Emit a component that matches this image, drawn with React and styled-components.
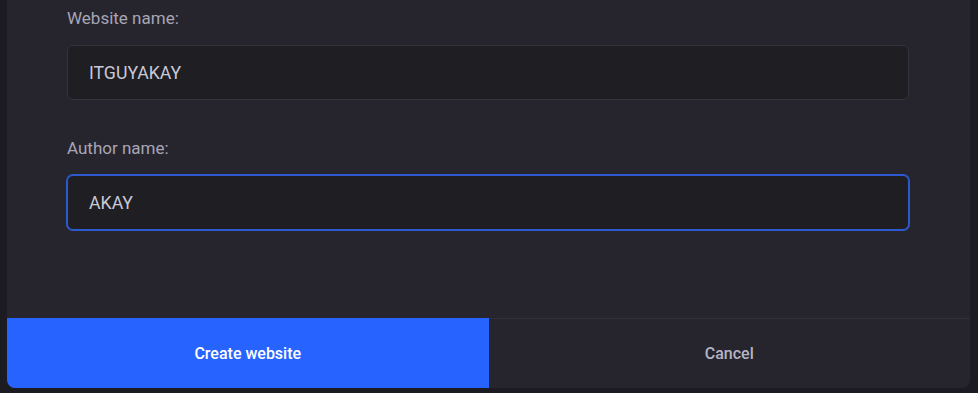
import React from "react";
import styled, { createGlobalStyle } from "styled-components";

const Global = createGlobalStyle`
  html, body { margin: 0; padding: 0; background: #1c1b21; }
  body { font-family: Roboto, "Liberation Sans", Arial, sans-serif; }
  * { box-sizing: border-box; }
`;

const Page = styled.div`
  width: 978px;
  height: 393px;
  padding: 0 8px 5px 7px;
  background: #1c1b21;
`;

const Card = styled.div`
  height: 388px;
  background: #26252e;
  border-radius: 0 0 8px 8px;
  overflow: hidden;
  display: flex;
  flex-direction: column;
`;

const Body = styled.div`
  flex: 1;
  padding: 9px 61px 0 60px;
  display: flex;
  flex-direction: column;
  gap: 39px;
`;

const Field = styled.div`
  display: flex;
  flex-direction: column;
  gap: 17px;
`;

const Label = styled.label`
  font-size: 17px;
  line-height: 19px;
  color: #a7a6b6;
`;

const Input = styled.input`
  height: 55px;
  width: 100%;
  padding: 0 21px;
  background: #1e1e23;
  border: 1px solid ${p => (p.$focused ? "#2d59d0" : "#34333d")};
  box-shadow: ${p => (p.$focused ? "0 0 0 1px #2d59d0" : "none")};
  border-radius: 6px;
  color: #c9c9d8;
  font-family: inherit;
  font-size: 17.7px;
  outline: none;
`;

const Footer = styled.div`
  height: 70px;
  border-top: 1px solid #302f3a;
  display: grid;
  grid-template-columns: 1fr 1fr;
`;

const Button = styled.button`
  border: none;
  margin: 0;
  margin-top: ${p => (p.$primary ? "-1px" : "0")};
  height: ${p => (p.$primary ? "70px" : "69px")};
  background: ${p => (p.$primary ? "#2764ff" : "transparent")};
  color: ${p => (p.$primary ? "#ffffff" : "#b5b4c4")};
  font-family: inherit;
  font-size: 16px;
  font-weight: 500;
  cursor: pointer;
`;

export default function App() {
  return (
    <Page>
      <Global />
      <Card>
        <Body>
          <Field>
            <Label>Website name:</Label>
            <Input defaultValue="ITGUYAKAY" />
          </Field>
          <Field>
            <Label>Author name:</Label>
            <Input defaultValue="AKAY" $focused />
          </Field>
        </Body>
        <Footer>
          <Button $primary>Create website</Button>
          <Button>Cancel</Button>
        </Footer>
      </Card>
    </Page>
  );
}
